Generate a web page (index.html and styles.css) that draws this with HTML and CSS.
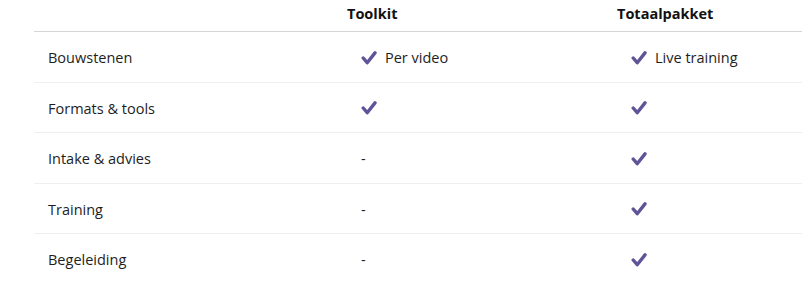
FILE: index.html
```html
<!DOCTYPE html>
<html lang="nl">
<head>
<meta charset="utf-8">
<link rel="stylesheet" href="styles.css">
</head>
<body>
<div class="table">
  <div class="head"></div>
  <div class="head">Toolkit</div>
  <div class="head">Totaalpakket</div>

  <div class="cell">Bouwstenen</div>
  <div class="cell"><svg class="check" viewBox="0 0 16 14"><path d="M2.2 7 L6.2 11.7 L14 1.9"/></svg><span>Per video</span></div>
  <div class="cell"><svg class="check" viewBox="0 0 16 14"><path d="M2.2 7 L6.2 11.7 L14 1.9"/></svg><span>Live training</span></div>

  <div class="cell">Formats &amp; tools</div>
  <div class="cell"><svg class="check" viewBox="0 0 16 14"><path d="M2.2 7 L6.2 11.7 L14 1.9"/></svg></div>
  <div class="cell"><svg class="check" viewBox="0 0 16 14"><path d="M2.2 7 L6.2 11.7 L14 1.9"/></svg></div>

  <div class="cell">Intake &amp; advies</div>
  <div class="cell">-</div>
  <div class="cell"><svg class="check" viewBox="0 0 16 14"><path d="M2.2 7 L6.2 11.7 L14 1.9"/></svg></div>

  <div class="cell">Training</div>
  <div class="cell">-</div>
  <div class="cell"><svg class="check" viewBox="0 0 16 14"><path d="M2.2 7 L6.2 11.7 L14 1.9"/></svg></div>

  <div class="cell last">Begeleiding</div>
  <div class="cell last">-</div>
  <div class="cell last"><svg class="check" viewBox="0 0 16 14"><path d="M2.2 7 L6.2 11.7 L14 1.9"/></svg></div>
</div>
</body>
</html>
```

FILE: styles.css
```css
html, body {
  margin: 0;
  padding: 0;
  background: #ffffff;
  overflow: hidden;
}
body {
  font-family: "Open Sans", "Noto Sans", Arial, sans-serif;
  font-size: 14.5px;
  color: #1e1e1e;
}
.table {
  margin-left: 34px;
  width: 768px;
  display: grid;
  grid-template-columns: 313px 270px 1fr;
}
.head {
  height: 30px;
  line-height: 28px;
  font-weight: 700;
  color: #111;
  border-bottom: 1px solid #d6d6d6;
  padding-top: 0;
  box-sizing: content-box;
  padding-bottom: 1px;
}
.cell {
  display: flex;
  align-items: center;
  gap: 8px;
  padding: 15px 0 13px 14px;
  line-height: 21.5px;
  border-bottom: 1px solid #efefef;
}
.cell.last {
  border-bottom-color: transparent;
}
.check {
  width: 16px;
  height: 14px;
  flex: none;
}
.check path {
  fill: none;
  stroke: #5f5497;
  stroke-width: 3.4;
  stroke-linecap: round;
  stroke-linejoin: round;
}
```
